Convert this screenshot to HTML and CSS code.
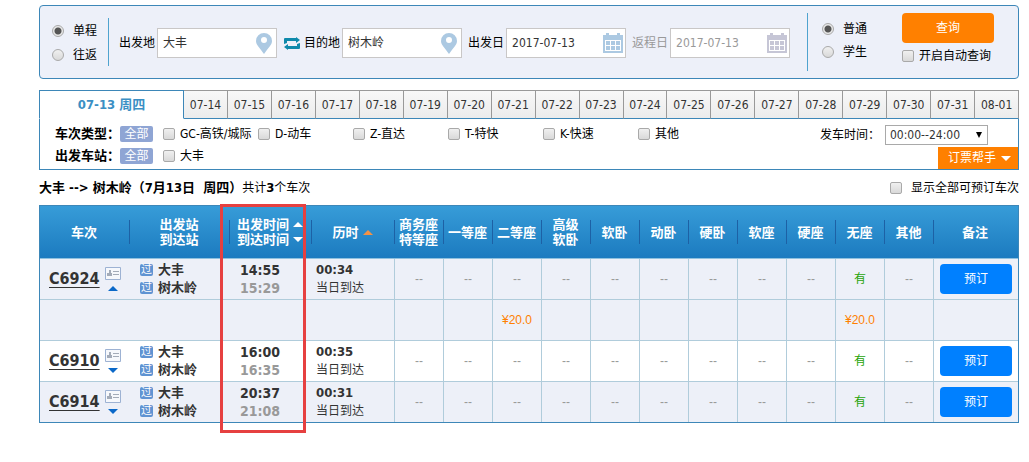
FILE: index.html
```html
<!DOCTYPE html>
<html lang="zh-CN">
<head>
    <meta charset="UTF-8">
    <meta name="viewport" content="width=device-width, initial-scale=1.0">
    <title>车票预订</title>
    <link rel="stylesheet" href="styles.css">
</head>
<body>
    <svg class="sprite" width="0" height="0">
        <symbol id="pin" viewBox="0 0 16 21">
            <path fill-rule="evenodd" d="M8 0a8 8 0 0 1 8 8c0 4-4 7-8 13C4 15 0 12 0 8a8 8 0 0 1 8-8zm0 4a3 3 0 1 0 0 6 3 3 0 0 0 0-6z"/>
        </symbol>
        <symbol id="calendar" viewBox="0 0 20 20">
            <path fill-rule="evenodd" d="M0 2h3V0h3v2h8V0h3v2h3v18H0zM2 7v11h16V7z"/>
            <path d="M3 8h4v4H3zM8 8h4v4H8zM13 8h4v4h-4zM3 13h4v4H3zM8 13h4v4H8zM13 13h4v4h-4z"/>
        </symbol>
        <symbol id="card" viewBox="0 0 16 13">
            <path fill="#f6f8fc" stroke="#9db2d3" d="M.5.5h15v12H.5z"/>
            <path fill="#a3abb8" d="M4 3h2v3h1v3H2V6h2zM8 4h6v1H8zM8 7h6v1H8z"/>
        </symbol>
    </svg>

    <div class="container">
        <form class="search">
            <div class="options trip">
                <label><input type="radio" name="trip" checked>单程</label>
                <label><input type="radio" name="trip">往返</label>
            </div>
            <div class="fields">
                <label for="from">出发地</label>
                <div class="field">
                    <input type="text" id="from" value="大丰">
                    <svg class="pin"><use href="#pin"/></svg>
                </div>
                <button type="button" class="swap" aria-label="切换">
                    <svg width="16" height="13" viewBox="0 0 16 13">
                        <path d="M0 7V2q0-1 1-1h11V0l4 3-4 3V4H3v2zM16 6v5q0 1-1 1H4v1l-4-3 4-3v2h9V7z"/>
                    </svg>
                </button>
                <label for="to">目的地</label>
                <div class="field">
                    <input type="text" id="to" value="树木岭">
                    <svg class="pin"><use href="#pin"/></svg>
                </div>
                <label for="goDate" class="next">出发日</label>
                <div class="field">
                    <input type="text" id="goDate" value="2017-07-13">
                    <svg class="calendar"><use href="#calendar"/></svg>
                </div>
                <label for="backDate" class="next muted">返程日</label>
                <div class="field muted">
                    <input type="text" id="backDate" value="2017-07-13">
                    <svg class="calendar"><use href="#calendar"/></svg>
                </div>
            </div>
            <div class="options passenger">
                <label><input type="radio" name="passenger" checked>普通</label>
                <label><input type="radio" name="passenger">学生</label>
            </div>
            <div class="submit">
                <button type="button" class="query">查询</button>
                <label><input type="checkbox">开启自动查询</label>
            </div>
        </form>

        <div class="tabs">
            <button type="button" class="active">07-13 周四</button>
            <button type="button">07-14</button>
            <button type="button">07-15</button>
            <button type="button">07-16</button>
            <button type="button">07-17</button>
            <button type="button">07-18</button>
            <button type="button">07-19</button>
            <button type="button">07-20</button>
            <button type="button">07-21</button>
            <button type="button">07-22</button>
            <button type="button">07-23</button>
            <button type="button">07-24</button>
            <button type="button">07-25</button>
            <button type="button">07-26</button>
            <button type="button">07-27</button>
            <button type="button">07-28</button>
            <button type="button">07-29</button>
            <button type="button">07-30</button>
            <button type="button">07-31</button>
            <button type="button">08-01</button>
        </div>

        <div class="filters">
            <div class="filter-rows">
                <div class="filter-row">
                    <b>车次类型：</b>
                    <button type="button" class="all">全部</button>
                    <label><input type="checkbox">GC-高铁/城际</label>
                    <label><input type="checkbox">D-动车</label>
                    <label><input type="checkbox">Z-直达</label>
                    <label><input type="checkbox">T-特快</label>
                    <label><input type="checkbox">K-快速</label>
                    <label><input type="checkbox">其他</label>
                </div>
                <div class="filter-row">
                    <b>出发车站：</b>
                    <button type="button" class="all">全部</button>
                    <label><input type="checkbox">大丰</label>
                </div>
            </div>
            <div class="filter-side">
                <div class="time">
                    <label for="startTime">发车时间：</label>
                    <div class="select">
                        <select id="startTime">
                            <option>00:00--24:00</option>
                        </select>
                    </div>
                </div>
                <button type="button" class="helper">订票帮手<i class="arrow down"></i></button>
            </div>
        </div>

        <div class="summary">
            <p><b>大丰 --&gt; 树木岭（7月13日&nbsp; 周四）</b>共计<b>3</b>个车次</p>
            <label><input type="checkbox">显示全部可预订车次</label>
        </div>

        <div class="trains">
            <table>
                <colgroup>
                    <col class="col-train">
                    <col class="col-station">
                    <col class="col-time">
                    <col class="col-duration">
                    <col class="col-seat" span="11">
                    <col class="col-remark">
                </colgroup>
                <thead>
                    <tr>
                        <th>车次</th>
                        <th>出发站<br>到达站</th>
                        <th>
                            <div class="sort">出发时间<i class="arrow up"></i></div>
                            <div class="sort">到达时间<i class="arrow down"></i></div>
                        </th>
                        <th><div class="sort current">历时<i class="arrow up"></i></div></th>
                        <th>商务座<br>特等座</th>
                        <th>一等座</th>
                        <th>二等座</th>
                        <th>高级<br>软卧</th>
                        <th>软卧</th>
                        <th>动卧</th>
                        <th>硬卧</th>
                        <th>软座</th>
                        <th>硬座</th>
                        <th>无座</th>
                        <th>其他</th>
                        <th>备注</th>
                    </tr>
                </thead>
                <tbody>
                    <tr>
                        <td>
                            <div class="train">
                                <a href="#">C6924</a>
                                <div class="marks"><svg class="card"><use href="#card"/></svg><i class="arrow up"></i></div>
                            </div>
                        </td>
                        <td class="station"><div><span>过</span>大丰</div><div><span>过</span>树木岭</div></td>
                        <td class="clock"><div>14:55</div><div class="arrive">15:29</div></td>
                        <td class="duration"><div>00:34</div><p>当日到达</p></td>
                        <td>--</td><td>--</td><td>--</td><td>--</td><td>--</td><td>--</td><td>--</td><td>--</td><td>--</td>
                        <td class="yes">有</td>
                        <td>--</td>
                        <td><button type="button" class="book">预订</button></td>
                    </tr>
                    <tr class="prices">
                        <td></td><td></td><td></td><td class="duration"></td>
                        <td></td><td></td><td>¥20.0</td><td></td><td></td><td></td><td></td><td></td><td></td>
                        <td>¥20.0</td>
                        <td></td><td></td>
                    </tr>
                    <tr class="even">
                        <td>
                            <div class="train">
                                <a href="#">C6910</a>
                                <div class="marks"><svg class="card"><use href="#card"/></svg><i class="arrow down"></i></div>
                            </div>
                        </td>
                        <td class="station"><div><span>过</span>大丰</div><div><span>过</span>树木岭</div></td>
                        <td class="clock"><div>16:00</div><div class="arrive">16:35</div></td>
                        <td class="duration"><div>00:35</div><p>当日到达</p></td>
                        <td>--</td><td>--</td><td>--</td><td>--</td><td>--</td><td>--</td><td>--</td><td>--</td><td>--</td>
                        <td class="yes">有</td>
                        <td>--</td>
                        <td><button type="button" class="book">预订</button></td>
                    </tr>
                    <tr>
                        <td>
                            <div class="train">
                                <a href="#">C6914</a>
                                <div class="marks"><svg class="card"><use href="#card"/></svg><i class="arrow down"></i></div>
                            </div>
                        </td>
                        <td class="station"><div><span>过</span>大丰</div><div><span>过</span>树木岭</div></td>
                        <td class="clock"><div>20:37</div><div class="arrive">21:08</div></td>
                        <td class="duration"><div>00:31</div><p>当日到达</p></td>
                        <td>--</td><td>--</td><td>--</td><td>--</td><td>--</td><td>--</td><td>--</td><td>--</td><td>--</td>
                        <td class="yes">有</td>
                        <td>--</td>
                        <td><button type="button" class="book">预订</button></td>
                    </tr>
                </tbody>
            </table>
            <div class="highlight"></div>
        </div>
    </div>
</body>
</html>
```

FILE: styles.css
```css
* {
    box-sizing: border-box;
    margin: 0;
    padding: 0;
}

body {
    font-family: "DejaVu Sans Condensed", "Noto Sans", "Noto Sans CJK SC", sans-serif;
    font-size: 12px;
    line-height: 18px;
    color: #000;
    background: #fff;
}

.sprite {
    position: absolute;
}

.container {
    padding: 5px 10px 28px 39px;
}

input, select, button {
    font: inherit;
    color: inherit;
}

button {
    border: none;
    cursor: pointer;
}

label {
    white-space: nowrap;
}

input[type="radio"], input[type="checkbox"] {
    appearance: none;
    flex: none;
    width: 12px;
    height: 12px;
    border: 1px solid #a9a9a9;
    border-radius: 2px;
    background: linear-gradient(#f0f0f0, #d9d9d9);
}

input[type="radio"] {
    border-radius: 50%;
}

input[type="radio"]:checked {
    background: radial-gradient(circle, #555 3px, #e8e8e8 4px);
}

/* Search bar */
.search {
    display: flex;
    align-items: center;
    height: 74px;
    padding: 0 24px 0 12px;
    border: 1px solid #3d87b8;
    border-radius: 4px;
    background: #edf0f9;
}

.options {
    display: flex;
    flex-direction: column;
}

.options label, .submit label, .summary label, .filter-row label {
    display: flex;
    align-items: center;
}

.trip {
    gap: 6px;
    height: 48px;
    padding: 4px 11px 0 0;
    border-right: 1px solid #4fa3cf;
}

.trip label, .passenger label {
    gap: 9px;
}

.fields {
    display: flex;
    align-items: center;
    padding: 2px 0 0 10px;
}

.field {
    display: flex;
    align-items: center;
    width: 120px;
    height: 30px;
    margin-left: 2px;
    padding-right: 4px;
    border: 1px solid #c9c7c7;
    background: #fff;
    color: #333;
}

.field input {
    flex: 1;
    min-width: 0;
    padding-left: 5px;
    border: none;
    outline: none;
    background: none;
}

.field svg {
    fill: #acc9e2;
}

.pin {
    width: 16px;
    height: 21px;
}

.calendar {
    width: 20px;
    height: 20px;
    margin-right: -2px;
}

.next {
    margin-left: 6px;
}

.muted {
    color: #999;
}

.field.muted svg {
    fill: #c6c6d6;
}

.swap {
    display: flex;
    margin: 0 4px 0 7px;
    background: none;
}

.swap svg {
    fill: #0e89ab;
}

.passenger {
    gap: 5px;
    height: 58px;
    margin-left: auto;
    padding: 7px 35px 0 14px;
    border-left: 1px solid #4fa3cf;
}

.submit {
    display: flex;
    flex-direction: column;
    gap: 4px;
    padding-bottom: 6px;
}

.submit label {
    gap: 5px;
}

.query {
    width: 92px;
    height: 30px;
    border-radius: 4px;
    background: #ff8000;
    color: #fff;
}

/* Date tabs */
.tabs {
    display: flex;
    margin-top: 11px;
}

.tabs button {
    flex: 1;
    height: 29px;
    border: 1px solid #999;
    border-width: 1px 1px 1px 0;
    border-bottom-color: #3d87b8;
    background: linear-gradient(#f8f8f8, #ececec);
    color: #333;
}

.tabs .active {
    flex: 0 0 145px;
    border: 1px solid #3d87b8;
    border-bottom-color: #fff;
    background: #fff;
    color: #3b8fc4;
    font-size: 13px;
    font-weight: bold;
}

/* Filters */
.filters {
    display: flex;
    justify-content: space-between;
    border: 1px solid #3d87b8;
    border-top: none;
}

.filter-rows {
    padding: 4px 0 2px 15px;
}

.filter-row {
    display: flex;
    align-items: center;
    height: 22px;
}

.filter-row b {
    width: 65px;
    font-size: 13px;
}

.filter-row label {
    gap: 5px;
    width: 95px;
}

.all {
    width: 33px;
    height: 16px;
    margin-right: 10px;
    border-radius: 2px;
    background: #8fa5d4;
    color: #fff;
    line-height: 16px;
}

.filter-side {
    display: flex;
    flex-direction: column;
    align-items: flex-end;
    justify-content: space-between;
}

.time {
    display: flex;
    align-items: center;
    gap: 5px;
    padding: 6px 30px 0 0;
}

.select {
    position: relative;
}

.select select {
    appearance: none;
    display: block;
    width: 103px;
    height: 20px;
    padding-left: 4px;
    border: 1px solid #a9a9a9;
    background: #fff;
    color: #333;
}

.select::after {
    content: '';
    position: absolute;
    top: 7px;
    right: 6px;
    border: 3px solid transparent;
    border-top: 6px solid #000;
    border-bottom: none;
    pointer-events: none;
}

.helper {
    display: flex;
    align-items: center;
    gap: 5px;
    height: 22px;
    padding: 0 7px 0 10px;
    background: #ff8000;
    color: #fff;
}

.arrow {
    border: 5px solid transparent;
}

.arrow.up {
    border-top: none;
    border-bottom-color: currentColor;
}

.arrow.down {
    border-bottom: none;
    border-top-color: currentColor;
}

/* Result summary */
.summary {
    display: flex;
    align-items: center;
    justify-content: space-between;
    height: 35px;
}

.summary b {
    font-size: 13px;
}

.summary label {
    gap: 9px;
}

/* Trains */
.trains {
    position: relative;
    border: 1px solid #3d87b8;
}

table {
    width: 100%;
    table-layout: fixed;
    border-spacing: 0;
}

.col-train {
    width: 90px;
}

.col-station {
    width: 100px;
}

.col-time {
    width: 82px;
}

.col-duration {
    width: 83px;
}

.col-seat {
    width: 49px;
}

.col-remark {
    width: 84px;
}

thead {
    background: linear-gradient(#379cd8, #1b7abf);
}

th {
    height: 53px;
    padding-right: 2px;
    border-bottom: 1px solid #8fc1df;
    background: linear-gradient(#1d61a5, #1d61a5) right center / 1px 24px no-repeat;
    color: #fff;
    font-size: 13px;
    line-height: 15px;
    white-space: nowrap;
}

th:last-child {
    background: none;
}

.sort {
    display: flex;
    align-items: center;
    justify-content: center;
    gap: 4px;
}

.current .arrow {
    color: #f39245;
}

td {
    height: 41px;
    border-right: 1px solid #b0ccdb;
    border-bottom: 1px solid #b0ccdb;
    background: #edf0f8;
    color: #999;
    text-align: center;
}

td:nth-child(n+5) {
    font-family: "Liberation Sans", Arial, "Noto Sans CJK SC", sans-serif;
}

.even td {
    background: #fff;
}

td:nth-child(-n+3), td:last-child {
    border-right: none;
}

tbody tr:last-child td {
    height: 40px;
    border-bottom: none;
}

.train {
    display: flex;
    align-items: center;
    gap: 5px;
    padding-left: 9px;
}

.train a {
    color: #333;
    font-size: 16px;
    font-weight: bold;
    text-underline-offset: 3px;
}

.marks {
    display: flex;
    flex-direction: column;
    align-items: center;
    gap: 6px;
    color: #0a68c8;
}

.card {
    width: 16px;
    height: 13px;
}

.station {
    padding-left: 10px;
    color: #333;
    font-size: 13px;
    font-weight: bold;
}

.station div {
    display: flex;
    align-items: center;
    gap: 5px;
}

.station span {
    width: 13px;
    height: 12px;
    border-radius: 2px;
    background: #5f93d2;
    color: #fff;
    font-size: 11px;
    font-weight: normal;
    line-height: 12px;
}

.clock {
    padding-left: 10px;
    color: #333;
    font-size: 14px;
    font-weight: bold;
    text-align: left;
}

.arrive {
    color: #999;
}

.duration {
    padding-left: 4px;
    color: #333;
    text-align: left;
}

.duration div {
    font-size: 13px;
    font-weight: bold;
}

.prices td {
    color: #ff8000;
}

td.yes {
    color: #26a306;
}

.book {
    width: 72px;
    height: 30px;
    border-radius: 4px;
    background: #0080ff;
    color: #fff;
}

/* Red frame around the departure and arrival times */
.highlight {
    position: absolute;
    top: -2px;
    bottom: -11px;
    left: 180px;
    width: 86px;
    border: 3px solid #e64040;
    pointer-events: none;
}
```
